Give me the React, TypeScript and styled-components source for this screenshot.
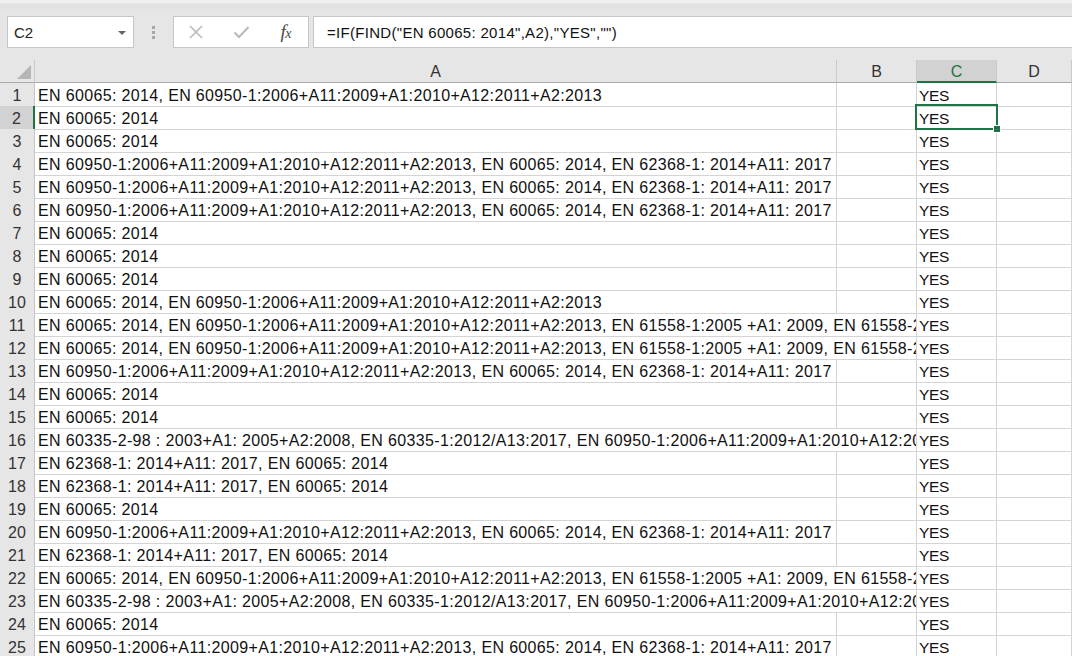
import React from "react";
import styled, { createGlobalStyle } from "styled-components";

const GlobalStyle = createGlobalStyle`
  html, body { margin: 0; padding: 0; background: #fff; }
  body { overflow: hidden; }
`;

const GREEN = "#217346";
const FONT = `"Liberation Sans", Arial, sans-serif`;

const Page = styled.div`
  width: 1072px;
  height: 656px;
  overflow: hidden;
  background: #fff;
  font-family: ${FONT};
  display: flex;
  flex-direction: column;
`;

const TopBar = styled.div`
  box-sizing: border-box;
  height: 60px;
  flex: none;
  padding: 16px 0 12px 7px;
  display: flex;
  align-items: stretch;
  background: linear-gradient(#efefef 0, #efefef 3px, #e0e0e0 4px, #e6e6e6 14px, #e6e6e6 100%);
`;

const NameBox = styled.div`
  box-sizing: border-box;
  width: 127px;
  background: #fff;
  border: 1px solid #c6c6c6;
  display: flex;
  align-items: center;
  justify-content: space-between;
  padding: 1px 7px 0 6px;
  font-size: 15px;
  color: #222;
`;

const Caret = styled.span`
  width: 0;
  height: 0;
  border-left: 4px solid transparent;
  border-right: 4px solid transparent;
  border-top: 4px solid #666;
`;

const Grip = styled.div`
  width: 39px;
  display: flex;
  flex-direction: column;
  align-items: center;
  justify-content: center;
  gap: 2px;
`;

const GripDot = styled.span`
  width: 3px;
  height: 3px;
  background: #a8a8a8;
`;

const ButtonBox = styled.div`
  box-sizing: border-box;
  width: 136px;
  background: #fff;
  border: 1px solid #c6c6c6;
  display: flex;
  align-items: center;
`;

const IconSlot = styled.div`
  width: 45px;
  height: 100%;
  display: flex;
  align-items: center;
  justify-content: center;
`;

const Fx = styled.span`
  font-family: "Liberation Serif", "Times New Roman", serif;
  font-style: italic;
  font-size: 19px;
  color: #4a4a4a;
  letter-spacing: -0.5px;
  small { font-size: 14px; }
`;

const FormulaInput = styled.div`
  box-sizing: border-box;
  flex: 1;
  margin-left: 4px;
  background: #fff;
  border: 1px solid #c6c6c6;
  border-right: none;
  display: flex;
  align-items: center;
  padding: 1px 0 0 13px;
  font-size: 15px;
  letter-spacing: 0.3px;
  color: #111;
  white-space: pre;
`;

const Sheet = styled.div`
  flex: 1;
  display: flex;
  flex-direction: column;
`;

const Row = styled.div`
  display: grid;
  grid-template-columns: 35px 802px 80px 80px 1fr;
  height: 23px;
  flex: none;
`;

const Corner = styled.div`
  position: relative;
  box-sizing: border-box;
  background: #e6e6e6;
  border-right: 1px solid #c9c9c9;
  border-bottom: 1px solid #ababab;
  &::after {
    content: "";
    position: absolute;
    right: 3px;
    bottom: 3px;
    width: 0;
    height: 0;
    border-left: 14px solid transparent;
    border-bottom: 14px solid #b5b5b5;
  }
`;

const ColHead = styled.div<{ $active?: boolean }>`
  box-sizing: border-box;
  background: ${(p) => (p.$active ? "#d2d2d2" : "#e6e6e6")};
  color: ${(p) => (p.$active ? GREEN : "#333")};
  border-right: 1px solid #c9c9c9;
  border-bottom: ${(p) => (p.$active ? `2px solid ${GREEN}` : "1px solid #ababab")};
  display: flex;
  align-items: center;
  justify-content: center;
  font-size: 16px;
  padding-top: 2px;
`;

const RowHead = styled.div<{ $active?: boolean }>`
  box-sizing: border-box;
  background: ${(p) => (p.$active ? "#d2d2d2" : "#e6e6e6")};
  color: #333;
  border-right: ${(p) => (p.$active ? `2px solid ${GREEN}` : "1px solid #c6c6c6")};
  border-bottom: 1px solid #d4d4d4;
  display: flex;
  align-items: center;
  justify-content: center;
  font-size: 16px;
  padding-top: 3px;
`;

const Cell = styled.div<{ $span?: number }>`
  position: relative;
  box-sizing: border-box;
  grid-column: span ${(p) => p.$span ?? 1};
  border-right: 1px solid #d4d4d4;
  border-bottom: 1px solid #d4d4d4;
  padding: 2px 2px 0 3px;
  font-size: 16px;
  line-height: 21px;
  color: #111;
  white-space: nowrap;
  overflow: ${(p) => ((p.$span ?? 1) > 1 ? "hidden" : "visible")};
  letter-spacing: 0.35px;
`;

const YesCell = styled(Cell)`
  letter-spacing: -0.4px;
  font-size: 15.5px;
  padding-left: 2px;
`;

const Selection = styled.div`
  position: absolute;
  z-index: 2;
  left: -2px;
  top: -2px;
  right: -2px;
  bottom: -1px;
  border: 2px solid ${GREEN};
  pointer-events: none;
`;

const Handle = styled.span`
  position: absolute;
  right: -5px;
  bottom: -5px;
  width: 6px;
  height: 6px;
  background: ${GREEN};
  border: 1px solid #fff;
`;

const SHORT = "EN 60065: 2014";
const L1 = "EN 60065: 2014, EN 60950-1:2006+A11:2009+A1:2010+A12:2011+A2:2013";
const L4 = "EN 60950-1:2006+A11:2009+A1:2010+A12:2011+A2:2013, EN 60065: 2014, EN 62368-1: 2014+A11: 2017";
const L11 = "EN 60065: 2014, EN 60950-1:2006+A11:2009+A1:2010+A12:2011+A2:2013, EN 61558-1:2005 +A1: 2009, EN 61558-2-16: 2009+A1: 2013";
const L16 = "EN 60335-2-98 : 2003+A1: 2005+A2:2008, EN 60335-1:2012/A13:2017, EN 60950-1:2006+A11:2009+A1:2010+A12:2011+A2:2013";
const L17 = "EN 62368-1: 2014+A11: 2017, EN 60065: 2014";

type Line = { text: string; wide?: boolean };

const rows: Line[] = [
  { text: L1 },
  { text: SHORT },
  { text: SHORT },
  { text: L4 },
  { text: L4 },
  { text: L4 },
  { text: SHORT },
  { text: SHORT },
  { text: SHORT },
  { text: L1 },
  { text: L11, wide: true },
  { text: L11, wide: true },
  { text: L4 },
  { text: SHORT },
  { text: SHORT },
  { text: L16, wide: true },
  { text: L17 },
  { text: L17 },
  { text: SHORT },
  { text: L4 },
  { text: L17 },
  { text: L11, wide: true },
  { text: L16, wide: true },
  { text: SHORT },
  { text: L4 },
];

const CrossIcon = () => (
  <svg width="16" height="16" viewBox="0 0 16 16">
    <path d="M2 2 L14 14 M14 2 L2 14" stroke="#b9b9b9" strokeWidth="1.6" fill="none" />
  </svg>
);

const CheckIcon = () => (
  <svg width="17" height="14" viewBox="0 0 17 14">
    <path d="M1.5 7.5 L6 12 L15.5 2" stroke="#b9b9b9" strokeWidth="2" fill="none" />
  </svg>
);

export default function App() {
  return (
    <Page>
      <GlobalStyle />
      <TopBar>
        <NameBox>
          <span>C2</span>
          <Caret />
        </NameBox>
        <Grip>
          <GripDot />
          <GripDot />
          <GripDot />
        </Grip>
        <ButtonBox>
          <IconSlot>
            <CrossIcon />
          </IconSlot>
          <IconSlot>
            <CheckIcon />
          </IconSlot>
          <IconSlot>
            <Fx>
              f<small>x</small>
            </Fx>
          </IconSlot>
        </ButtonBox>
        <FormulaInput>{'=IF(FIND("EN 60065: 2014",A2),"YES","")'}</FormulaInput>
      </TopBar>
      <Sheet>
        <Row>
          <Corner />
          <ColHead>A</ColHead>
          <ColHead>B</ColHead>
          <ColHead $active>C</ColHead>
          <ColHead>D</ColHead>
        </Row>
        {rows.map((r, i) => {
          const n = i + 1;
          const active = n === 2;
          return (
            <Row key={n}>
              <RowHead $active={active}>{n}</RowHead>
              {r.wide ? (
                <Cell $span={2}>{r.text}</Cell>
              ) : (
                <>
                  <Cell>{r.text}</Cell>
                  <Cell />
                </>
              )}
              <YesCell>
                YES
                {active && (
                  <Selection>
                    <Handle />
                  </Selection>
                )}
              </YesCell>
              <Cell />
            </Row>
          );
        })}
      </Sheet>
    </Page>
  );
}
